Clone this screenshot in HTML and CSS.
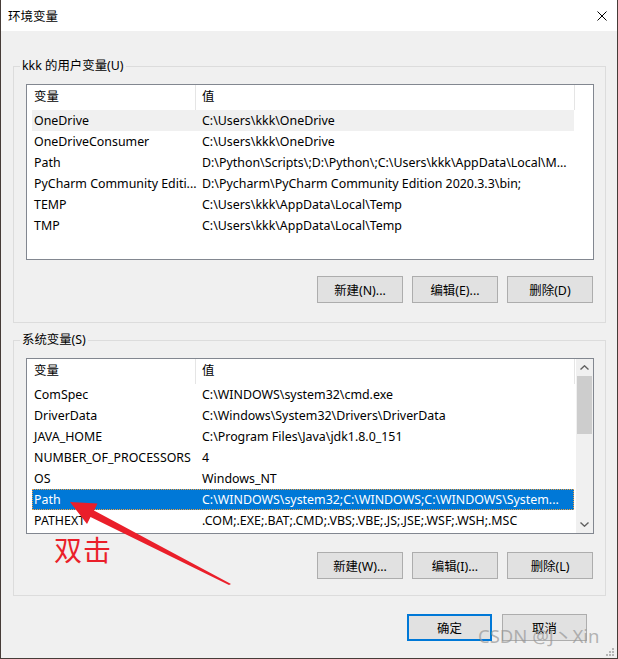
FILE: index.html
```html
<!DOCTYPE html>
<html lang="zh-CN">
<head>
<meta charset="utf-8">
<title>环境变量</title>
<link rel="stylesheet" href="styles.css">
</head>
<body>
<div class="window">
  <div class="titlebar">
    <span class="title">环境变量</span>
    <svg class="close" width="10" height="10" viewBox="0 0 10 10"><path d="M0.5 0.5L9.5 9.5M9.5 0.5L0.5 9.5" stroke="#000" stroke-width="1" fill="none"/></svg>
  </div>
  <div class="content">
    <fieldset class="group group-user">
      <legend>kkk 的用户变量(U)</legend>
      <div class="lv">
        <div class="lv-main">
          <div class="lv-header"><div class="hcell c1">变量</div><div class="hcell c2">值</div></div>
          <div class="row hover"><div class="cell c1">OneDrive</div><div class="cell c2">C:\Users\kkk\OneDrive</div></div>
          <div class="row"><div class="cell c1">OneDriveConsumer</div><div class="cell c2">C:\Users\kkk\OneDrive</div></div>
          <div class="row"><div class="cell c1">Path</div><div class="cell c2">D:\Python\Scripts\;D:\Python\;C:\Users\kkk\AppData\Local\M...</div></div>
          <div class="row"><div class="cell c1">PyCharm Community Editi...</div><div class="cell c2">D:\Pycharm\PyCharm Community Edition 2020.3.3\bin;</div></div>
          <div class="row"><div class="cell c1">TEMP</div><div class="cell c2">C:\Users\kkk\AppData\Local\Temp</div></div>
          <div class="row"><div class="cell c1">TMP</div><div class="cell c2">C:\Users\kkk\AppData\Local\Temp</div></div>
        </div>
      </div>
      <div class="btnrow">
        <button class="btn">新建(N)...</button>
        <button class="btn">编辑(E)...</button>
        <button class="btn">删除(D)</button>
      </div>
    </fieldset>

    <fieldset class="group group-sys">
      <legend>系统变量(S)</legend>
      <div class="lv">
        <div class="lv-main">
          <div class="lv-header"><div class="hcell c1">变量</div><div class="hcell c2">值</div></div>
          <div class="row"><div class="cell c1">ComSpec</div><div class="cell c2">C:\WINDOWS\system32\cmd.exe</div></div>
          <div class="row"><div class="cell c1">DriverData</div><div class="cell c2">C:\Windows\System32\Drivers\DriverData</div></div>
          <div class="row"><div class="cell c1">JAVA_HOME</div><div class="cell c2">C:\Program Files\Java\jdk1.8.0_151</div></div>
          <div class="row"><div class="cell c1">NUMBER_OF_PROCESSORS</div><div class="cell c2">4</div></div>
          <div class="row"><div class="cell c1">OS</div><div class="cell c2">Windows_NT</div></div>
          <div class="row selected"><div class="cell c1">Path</div><div class="cell c2">C:\WINDOWS\system32;C:\WINDOWS;C:\WINDOWS\System...</div></div>
          <div class="row"><div class="cell c1">PATHEXT</div><div class="cell c2">.COM;.EXE;.BAT;.CMD;.VBS;.VBE;.JS;.JSE;.WSF;.WSH;.MSC</div></div>
        </div>
        <div class="scrollbar">
          <div class="sb-arrow"><svg width="9" height="5" viewBox="0 0 9 5"><path d="M0.5 4.5L4.5 0.8L8.5 4.5" stroke="#606060" stroke-width="1.4" fill="none"/></svg></div>
          <div class="sb-thumb"></div>
          <div class="sb-track"></div>
          <div class="sb-arrow"><svg width="9" height="5" viewBox="0 0 9 5"><path d="M0.5 0.5L4.5 4.2L8.5 0.5" stroke="#606060" stroke-width="1.4" fill="none"/></svg></div>
        </div>
      </div>
      <div class="btnrow">
        <button class="btn">新建(W)...</button>
        <button class="btn">编辑(I)...</button>
        <button class="btn">删除(L)</button>
      </div>
    </fieldset>

    <div class="dlg-btns">
      <button class="btn dlg default">确定</button>
      <button class="btn dlg">取消</button>
    </div>
  </div>

  <svg class="overlay" width="618" height="659" viewBox="0 0 618 659">
    <polygon points="70,502 97.5,503.5 94,510.5 231,584 229,585 90.5,517 87,524" fill="#ea1f2a"/>
    <g fill="#b5b5b5">
      <rect x="612" y="648" width="2" height="2"/>
      <rect x="609" y="651" width="2" height="2"/>
      <rect x="612" y="651" width="2" height="2"/>
      <rect x="606" y="654" width="2" height="2"/>
      <rect x="609" y="654" width="2" height="2"/>
      <rect x="612" y="654" width="2" height="2"/>
    </g>
  </svg>
  <div class="annot">双击</div>
  <div class="watermark">CSDN @J丶Xin</div>
</div>
</body>
</html>
```
FILE: styles.css
```css
html, body {
  margin: 0;
  padding: 0;
  background: #fff;
}
body {
  font-family: "Noto Sans", "Noto Sans CJK SC", sans-serif;
  font-size: 12px;
  color: #000;
}
.window {
  position: relative;
  width: 618px;
  height: 659px;
  box-sizing: border-box;
  border-left: 1px solid #463c38;
  border-right: 1px solid #463c38;
  border-bottom: 1px solid #463c38;
  background: #f0f0f0;
  display: flex;
  flex-direction: column;
  overflow: hidden;
}
.titlebar {
  height: 31px;
  flex: none;
  background: #fff;
  display: flex;
  align-items: center;
  justify-content: space-between;
  padding: 0 10px 0 7px;
}
.title {
  font-family: "Noto Sans CJK SC", sans-serif;
  font-size: 12.5px;
  line-height: 16px;
}
.close {
  display: block;
}
.content {
  flex: 1;
  padding: 0 11px 0 12px;
}
.group {
  margin: 27px 0 0;
  padding: 10px 11px 19px 12px;
  border: 1px solid #dcdcdc;
  min-width: 0;
}
.group-sys {
  margin-top: 9px;
  padding-bottom: 16px;
}
.group-sys .btnrow {
  margin-top: 18px;
}
legend {
  margin-left: -6px;
  padding: 0 2px;
  line-height: 16px;
  font-size: 12.4px;
}
.lv {
  height: 176px;
  box-sizing: border-box;
  border: 1px solid #828790;
  background: #fff;
  display: flex;
  overflow: hidden;
  font-size: 12.4px;
}
.lv-main {
  flex: 1;
  min-width: 0;
}
.lv-header {
  display: flex;
  height: 25px;
}
.hcell {
  box-sizing: border-box;
  border-right: 1px solid #e5e5e5;
  line-height: 24px;
  height: 25px;
}
.hcell.c1 {
  width: 169px;
  padding-left: 7px;
}
.hcell.c2 {
  width: 379px;
  padding-left: 6px;
}
.row {
  display: flex;
  width: 542px;
  height: 21px;
  margin-left: 5px;
  box-sizing: border-box;
  line-height: 21px;
}
.cell {
  white-space: nowrap;
  overflow: hidden;
  padding-left: 2px;
  box-sizing: border-box;
}
.cell.c1 {
  width: 168px;
  flex: none;
}
.cell.c2 {
  flex: 1;
}
.row.hover {
  background: #f0f0f0;
}
.row.selected {
  background: #0078d7;
  color: #fff;
  outline: 1px dotted #f0a040;
  outline-offset: -1px;
}
.scrollbar {
  width: 17px;
  flex: none;
  background: #f0f0f0;
  display: flex;
  flex-direction: column;
}
.sb-arrow {
  height: 17px;
  display: flex;
  align-items: center;
  justify-content: center;
}
.sb-arrow svg {
  display: block;
}
.sb-thumb {
  height: 58px;
  margin: 0 1px;
  background: #cdcdcd;
}
.sb-track {
  flex: 1;
}
.btnrow {
  display: flex;
  justify-content: flex-end;
  gap: 9px;
  margin-top: 16px;
  padding-right: 1px;
}
.btn {
  width: 86px;
  height: 27px;
  box-sizing: border-box;
  border: 1px solid #adadad;
  background: #e1e1e1;
  font-family: "Noto Sans", "Noto Sans CJK SC", sans-serif;
  font-size: 12.4px;
  color: #000;
  padding: 0;
  margin: 0;
  border-radius: 0;
}
.dlg-btns {
  display: flex;
  justify-content: flex-end;
  gap: 10px;
  margin-top: 18px;
  padding-right: 19px;
}
.btn.dlg {
  width: 85px;
}
.btn.default {
  border: 2px solid #0078d7;
}
.overlay {
  position: absolute;
  left: -1px;
  top: 0;
  pointer-events: none;
}
.annot {
  position: absolute;
  left: 53px;
  top: 532px;
  font-family: "Noto Sans CJK SC", sans-serif;
  font-size: 28px;
  line-height: 34px;
  color: #ea1f2a;
  letter-spacing: 1px;
}
.watermark {
  position: absolute;
  left: 477px;
  top: 625px;
  font-family: "Noto Sans", "Noto Sans CJK SC", sans-serif;
  font-size: 18.5px;
  line-height: 22px;
  color: rgba(150, 150, 150, 0.7);
  white-space: nowrap;
}
```
